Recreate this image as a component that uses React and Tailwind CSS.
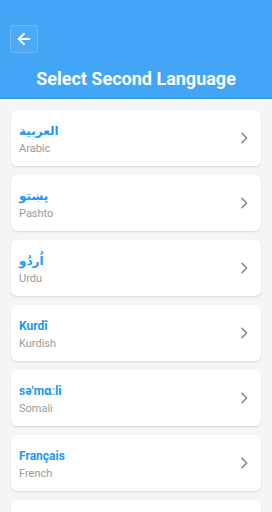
import React from "react";

const langs = [
  { n: "العربية", e: "Arabic" },
  { n: "پښتو", e: "Pashto" },
  { n: "اُردُو", e: "Urdu" },
  { n: "Kurdî", e: "Kurdish" },
  { n: "səˈmɑːli", e: "Somali" },
  { n: "Français", e: "French" },
  { n: "Español", e: "Spanish" },
];

export default function App() {
  return (
    <div className="w-[272px] h-[512px] overflow-hidden bg-[#f5f5f5]" style={{ fontFamily: "Roboto, 'Noto Sans', sans-serif" }}>
      <div className="h-[99px] bg-[#42a5f5] border-b border-[#2196f3] flex flex-col">
        <div className="pt-[25px] pl-[10px]">
          <div className="w-[28px] h-[28px] rounded-[4px] border border-white/20 bg-white/5 flex items-center justify-center">
            <svg width="18" height="18" viewBox="0 0 24 24" fill="none" stroke="white" strokeWidth="2.6" strokeLinecap="round" strokeLinejoin="round">
              <path d="M19 12H5" />
              <path d="M12 19l-7-7 7-7" />
            </svg>
          </div>
        </div>
        <div className="mt-[16px] text-center text-white font-bold text-[18px] leading-[20px]">Select Second Language</div>
      </div>
      <div className="flex flex-col gap-[9px] px-[11px] pt-[11px]">
        {langs.map((l) => (
          <div key={l.e} className="h-[56px] bg-white rounded-[6px] shadow-[0_1px_2px_rgba(0,0,0,0.12)] flex items-center pl-[8px] pr-[9px]">
            <div className="flex-1 flex flex-col self-start pt-[13px]">
              <div className="text-[#2196f3] font-bold text-[12px] leading-[16px] h-[16px]" style={{ fontFamily: "Roboto, 'Noto Sans', 'DejaVu Sans', sans-serif" }}>{l.n}</div>
              <div className="text-[#9a9a9a] text-[11px] leading-[14px] mt-[3px]">{l.e}</div>
            </div>
            <svg width="16" height="16" viewBox="0 0 24 24" fill="none" stroke="#8a8a8a" strokeWidth="2.4" strokeLinecap="round" strokeLinejoin="round">
              <path d="M9 5l7 7-7 7" />
            </svg>
          </div>
        ))}
      </div>
    </div>
  );
}
